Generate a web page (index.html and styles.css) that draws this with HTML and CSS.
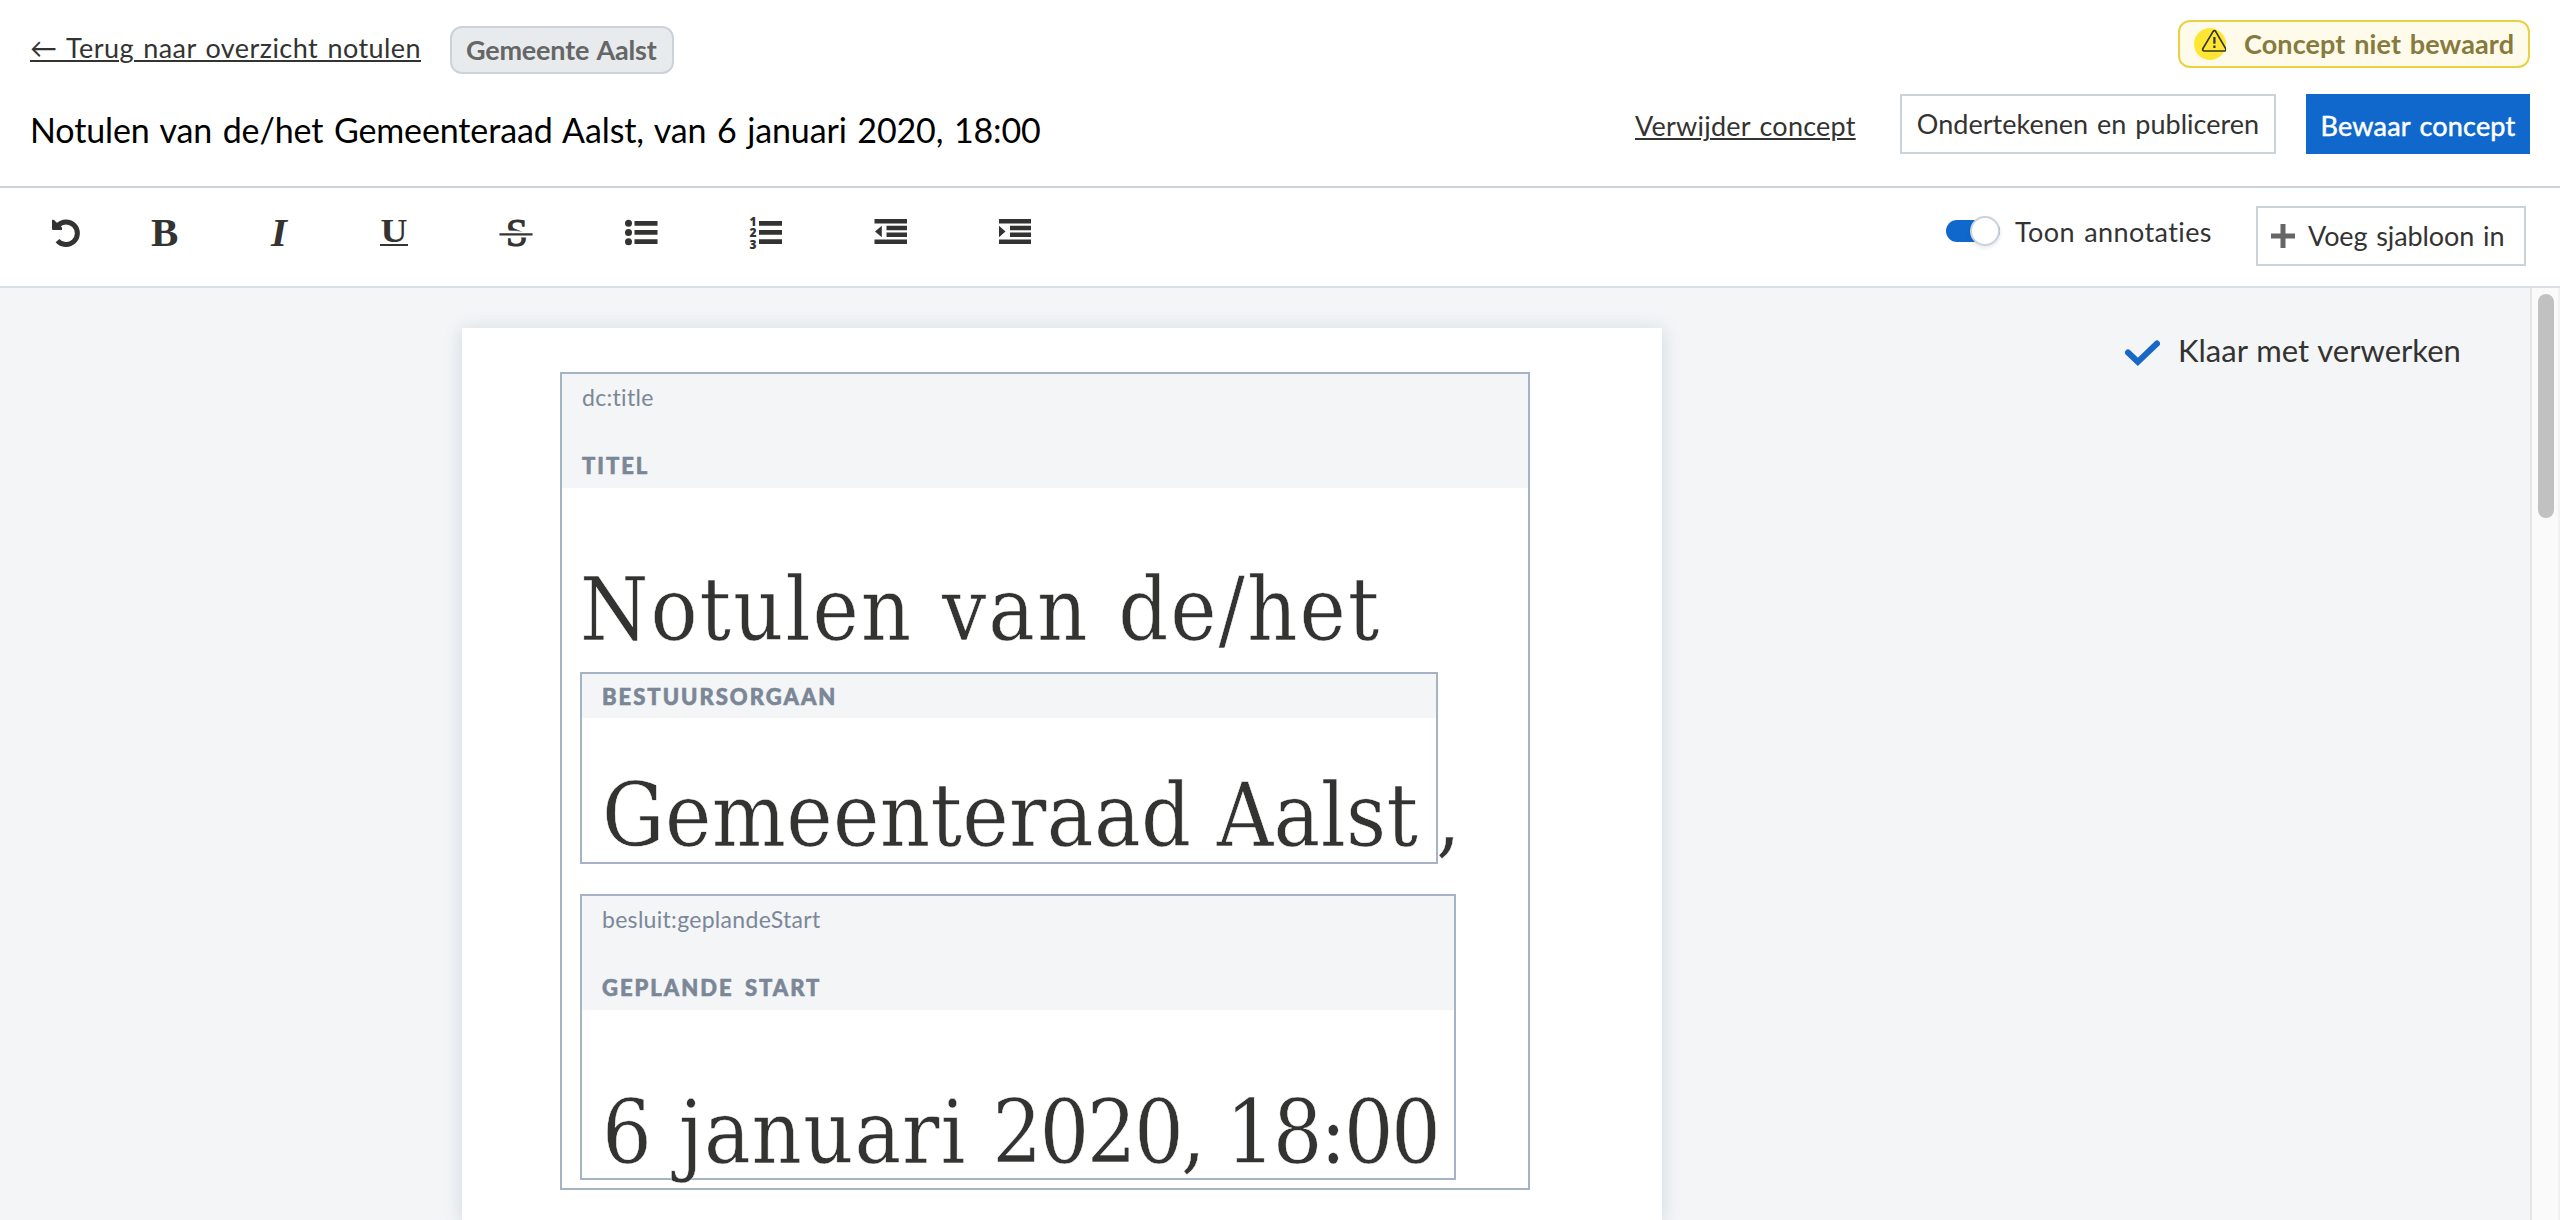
FILE: index.html
```html
<!DOCTYPE html>
<html lang="nl">
<head>
<meta charset="utf-8">
<title>Notulen</title>
<link rel="stylesheet" href="styles.css">
</head>
<body>
<header class="header">
  <div class="header-left">
    <div class="crumbs">
      <a class="back-link">← Terug naar overzicht notulen</a>
      <span class="badge">Gemeente Aalst</span>
    </div>
    <h1 class="doc-title">Notulen van de/het Gemeenteraad Aalst, van 6 januari 2020, 18:00</h1>
  </div>
  <div class="header-right">
    <div class="status">
      <svg class="status-icon" width="32" height="32" viewBox="0 0 32 32"><circle cx="16" cy="16" r="16" fill="#ffe632"/><path d="M19 3.600q1.400-2 2.800 0l9.900 17q.8 2.400-1.600 2.400H10.500q-2.400 0-1.600-2.400z" fill="none" stroke="#333332" stroke-width="1.700"/><path d="M20.400 9v6.800M20.400 17.600v2.300" stroke="#333332" stroke-width="2.200"/></svg>
      <span class="status-text">Concept niet bewaard</span>
    </div>
    <div class="actions">
      <a class="delete-link">Verwijder concept</a>
      <button class="btn btn-publish">Ondertekenen en publiceren</button>
      <button class="btn btn-save">Bewaar concept</button>
    </div>
  </div>
</header>

<div class="toolbar">
  <div class="tools">
    <svg class="icon" viewBox="0 0 40 40"><path d="M11.800 13.500A11.300 11.300 0 1 1 11.500 28.600" fill="none" stroke="#333332" stroke-width="5"/><path d="M6 8q2-.6 3 1l7 6.500v2.500H7q-1 0-1-1z"/></svg>
    <svg class="icon" viewBox="0 0 40 40"><text class="glyph" x="6" y="34">B</text></svg>
    <svg class="icon" viewBox="0 0 40 40"><text class="glyph italic" x="12" y="34">I</text></svg>
    <svg class="icon" viewBox="0 0 40 40"><text class="glyph under" x="6.500" y="29.500" textLength="27" lengthAdjust="spacingAndGlyphs">U</text><path d="M6 32h28v2H6z"/></svg>
    <svg class="icon" viewBox="0 0 40 40"><text class="glyph strike" x="10" y="33.500">S</text><path d="M8 18.500h25v7H8z" fill="#fff"/><path d="M12 18.500h10l5 1z"/><path d="M3.500 21.200h33v2.300h-33z"/></svg>
    <svg class="icon" viewBox="0 0 40 40"><circle cx="7.500" cy="11.300" r="3.500"/><circle cx="7.500" cy="20.500" r="3.500"/><circle cx="7.500" cy="29.700" r="3.500"/><path d="M13.500 9h23v4.700h-23zM13.500 18.100h23v4.700h-23zM13.500 27.300h23V32h-23z"/></svg>
    <svg class="icon" viewBox="0 0 40 40"><text class="num" x="3.500" y="13.500">1</text><text class="num" x="3.500" y="25">2</text><text class="num" x="3.500" y="36.500">3</text><path d="M13 9h23v4.700H13zM13 18.100h23v4.700H13zM13 27.300h23V32H13z"/></svg>
    <svg class="icon" viewBox="0 0 40 40"><path d="M3.500 7h32.500v4.500H3.500zM15.500 13.700H36v4.500H15.500zM15.500 20.500H36V25H15.500zM3.500 27.500H36V32H3.500zM10.800 13.700v11.600L4 19.500z"/></svg>
    <svg class="icon" viewBox="0 0 40 40"><path d="M4 7h32v4.500H4zM15 13.700h21v4.500H15zM15 20.500h21V25H15zM4 27.500h32V32H4zM4 13.700v11.600l6.500-5.800z"/></svg>
  </div>
  <div class="toolbar-right">
    <label class="toggle-field"><span class="toggle"><span class="knob"></span></span><span class="toggle-label">Toon annotaties</span></label>
    <button class="btn btn-template"><svg width="24" height="24" viewBox="0 0 24 24"><path d="M9.500 0h5v9.500H24v5h-9.500V24h-5v-9.500H0v-5h9.500z" fill="#666"/></svg><span>Voeg sjabloon in</span></button>
  </div>
</div>

<main class="workspace">
  <div class="canvas">
    <article class="paper">
      <section class="annotation outer">
        <div class="tag"><span class="tag-type">dc:title</span><span class="tag-name">Titel</span></div>
        <div class="outer-body">
          <div class="heading heading-main">Notulen van de/het</div>
          <div class="inline-row">
            <section class="annotation organ">
              <div class="tag tag-short"><span class="tag-name">Bestuursorgaan</span></div>
              <div class="heading heading-organ">Gemeenteraad Aalst</div>
            </section>
            <span class="comma">,</span>
          </div>
          <section class="annotation start">
            <div class="tag"><span class="tag-type">besluit:geplandeStart</span><span class="tag-name">Geplande start</span></div>
            <div class="heading heading-start"><span class="day">6 januari </span><span class="year">2020, 18:00</span></div>
          </section>
        </div>
      </section>
    </article>
  </div>
  <aside class="side">
    <svg width="36" height="26" viewBox="0 0 36 26"><path d="M4 12.500l9.800 9.300L33 3.500" fill="none" stroke="#1868c7" stroke-width="6" stroke-linecap="round"/></svg>
    <span>Klaar met verwerken</span>
  </aside>
  <div class="scrollbar"><div class="thumb"></div></div>
</main>
</body>
</html>
```

FILE: styles.css
```css
* { box-sizing: border-box; }
body {
  margin: 0;
  width: 2560px;
  height: 1220px;
  overflow: hidden;
  display: flex;
  flex-direction: column;
  background: #fff;
  color: #333332;
  font-family: Lato, "Open Sans", sans-serif;
  font-size: 27px;
  word-spacing: 2px;
  white-space: nowrap;
}

/* Header */
.header {
  height: 188px;
  flex: none;
  display: flex;
  justify-content: space-between;
  padding: 0 30px;
  border-bottom: 2px solid #cbd2da;
}
.header-left { padding-top: 26px; }
.crumbs { display: flex; gap: 30px; height: 48px; }
.back-link, .delete-link {
  text-decoration: underline;
  text-decoration-thickness: 2px;
  text-underline-offset: 2px;
}
.back-link { width: 390px; line-height: 40px; margin-top: 2px; letter-spacing: .43px; }
.badge {
  width: 224px;
  height: 48px;
  padding-left: 14px;
  border: 2px solid #cbd2da;
  border-radius: 12px;
  background: #e8ebee;
  color: #666;
  font-weight: 700;
  line-height: 44px;
  letter-spacing: -.2px;
}
.doc-title {
  margin: 36px 0 0;
  color: #000;
  font-size: 34px;
  font-weight: 400;
  line-height: 40px;
  word-spacing: 2px;
  letter-spacing: -.12px;
}
.header-right { display: flex; flex-direction: column; align-items: flex-end; padding-top: 20px; }
.status {
  display: flex;
  gap: 18px;
  width: 352px;
  height: 48px;
  padding: 6px 0 0 14px;
  border: 2px solid #e8d244;
  border-radius: 12px;
  background: #fffbeb;
  color: #877a3d;
}
.status-text { margin-top: -6px; font-weight: 700; line-height: 44px; letter-spacing: .12px; }
.actions { display: flex; margin-top: 26px; }
.delete-link { width: 221px; margin-right: 44px; line-height: 64px; letter-spacing: .24px; }
.btn {
  height: 60px;
  padding: 0;
  border: 2px solid #cbd2da;
  background: #fff;
  color: #333332;
  font: inherit;
  line-height: 56px;
  word-spacing: inherit;
}
.btn-publish { width: 376px; margin-right: 30px; letter-spacing: .02px; }
.btn-save {
  width: 224px;
  border-color: #1068cd;
  background: #1068cd;
  color: #fff;
  line-height: 60px;
  letter-spacing: .2px;
  -webkit-text-stroke: .5px #fff;
}

/* Toolbar */
.toolbar {
  height: 100px;
  flex: none;
  display: flex;
  justify-content: space-between;
  padding: 18px 34px 0 16px;
  border-bottom: 2px solid #dae0e5;
}
.tools {
  display: grid;
  grid-template-columns: 100px 98px 130px 100px 144px 106px 144px 105px 144px;
  justify-items: center;
  padding-top: 6px;
}
.icon { width: 40px; height: 40px; fill: #333332; overflow: visible; }
.glyph { font: bold 41px "Liberation Serif", serif; }
.glyph.italic { font-style: italic; }
.glyph.under { font-size: 34px; }
.glyph.strike { font-weight: 400; font-size: 39px; stroke: #333332; stroke-width: 1.2px; }
.num { font: 800 12px "Open Sans", sans-serif; }
.toolbar-right { display: flex; }
.toggle-field { display: flex; gap: 15px; width: 310px; }
.toggle {
  width: 54px;
  height: 22px;
  margin-top: 14px;
  display: flex;
  justify-content: flex-end;
  align-items: center;
  border-radius: 11px;
  background: #1068cd;
}
.knob {
  flex: none;
  width: 30px;
  height: 30px;
  border: 2px solid #cbd2da;
  border-radius: 50%;
  background: #fff;
  box-shadow: 0 2px 4px rgba(0, 0, 0, .1);
}
.toggle-label { line-height: 52px; letter-spacing: .4px; }
.btn-template { width: 270px; display: flex; align-items: center; gap: 13px; padding-left: 13px; letter-spacing: -.1px; }

/* Editor area */
.workspace { flex: 1; min-height: 0; display: flex; background: #f3f5f7; }
.canvas { width: 2124px; display: flex; justify-content: center; padding-top: 40px; }
.paper {
  width: 1200px;
  padding: 44px 132px 0 98px;
  background: #fff;
  box-shadow: 0 2px 16px rgba(120, 145, 165, .3);
}
.annotation { border: 2px solid #a5b3c5; }
.outer { height: 818px; }
.outer-body { padding-left: 18px; }
.tag {
  height: 114px;
  display: flex;
  flex-direction: column;
  justify-content: space-between;
  padding-left: 20px;
  background: #f3f5f7;
  color: #7b8797;
  font-size: 22px;
}
.tag-short { height: 44px; }
.tag-type { font-size: 23px; line-height: 46px; letter-spacing: .3px; }
.tag-name {
  line-height: 45px;
  font-weight: 900;
  text-transform: uppercase;
  word-spacing: 4px;
  letter-spacing: 2px;
  -webkit-text-stroke: .6px #7b8797;
}
.heading, .comma {
  font-family: "DejaVu Serif Condensed", "DejaVu Serif", serif;
  font-size: 87px;
  line-height: 90px;
  word-spacing: 0;
  -webkit-text-stroke: .5px #fff;
}
.heading-main { padding-top: 61px; line-height: 123px; letter-spacing: 2px; word-spacing: 2px; }
.heading-organ { padding: 53px 0 0 20px; letter-spacing: .4px; }
.heading-start { padding: 78px 0 0 20px; white-space: pre; }
.day { letter-spacing: 1px; }
.year { letter-spacing: -2.6px; }
.inline-row { display: flex; align-items: flex-end; }
.organ { width: 858px; height: 192px; }
.comma { margin: 0 0 2px -2px; }
.start { width: 876px; height: 286px; margin-top: 30px; }
.side { width: 406px; display: flex; gap: 18px; padding-top: 52px; font-size: 31px; word-spacing: 1px; }
.side span { line-height: 44px; margin-top: -12px; }
.scrollbar { width: 30px; padding: 6px 0 0 6px; border-left: 2px solid #e5e6e7; border-right: 2px solid #f1f1f1; background: #fafafa; }
.thumb { width: 16px; height: 224px; border-radius: 8px; background: #c1c1c1; }
```
